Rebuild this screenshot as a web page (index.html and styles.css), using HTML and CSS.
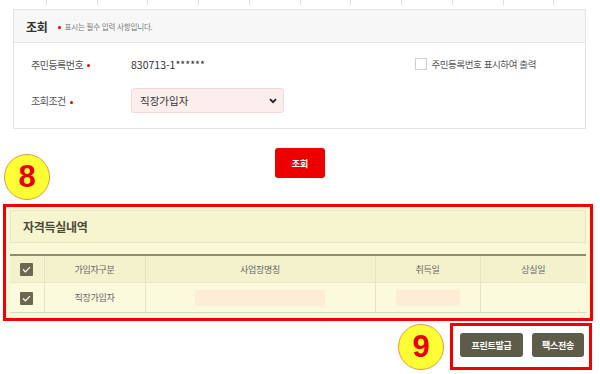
FILE: index.html
```html
<!DOCTYPE html>
<html lang="ko">
<head>
  <meta charset="UTF-8">
  <meta name="viewport" content="width=device-width, initial-scale=1.0">
  <title>자격득실내역 조회</title>
  <link rel="stylesheet" href="styles.css">
</head>
<body>

  <!-- 위쪽 탭 줄 (잘린 부분) -->
  <div class="tabs">
    <span></span><span></span><span></span><span></span><span></span><span></span>
    <span></span><span></span><span></span><span></span><span></span><span></span>
  </div>

  <section class="search">
    <div class="search-head">
      <h2>조회</h2>
      <i class="dot head-dot"></i>
      <span class="note">표시는 필수 입력 사항입니다.</span>
    </div>
    <div class="search-body">
      <div class="row">
        <span class="label">주민등록번호<i class="dot"></i></span>
        <span class="value">830713-1******</span>
        <label class="check"><span class="check-box"></span>주민등록번호 표시하여 출력</label>
      </div>
      <div class="row row-select">
        <span class="label">조회조건<i class="dot"></i></span>
        <div class="select">
          <span>직장가입자</span>
          <svg width="8" height="6" viewBox="0 0 8 6"><path d="M1 1.2 4 4.2 7 1.2" fill="none" stroke="#222" stroke-width="1.8"/></svg>
        </div>
      </div>
    </div>
  </section>

  <div class="actions">
    <button class="btn-search">조회</button>
  </div>

  <div class="result mark-box">
    <div class="result-title">자격득실내역</div>
    <table>
      <colgroup>
        <col style="width:34px">
        <col style="width:101px">
        <col style="width:230px">
        <col style="width:105px">
        <col>
      </colgroup>
      <thead>
        <tr>
          <th><span class="cb"><svg width="9" height="7" viewBox="0 0 9 7"><path d="M1 3.5 3.4 5.8 8 1.2" fill="none" stroke="#fff" stroke-width="1.2"/></svg></span></th>
          <th>가입자구분</th>
          <th>사업장명칭</th>
          <th>취득일</th>
          <th>상실일</th>
        </tr>
      </thead>
      <tbody>
        <tr>
          <td><span class="cb"><svg width="9" height="7" viewBox="0 0 9 7"><path d="M1 3.5 3.4 5.8 8 1.2" fill="none" stroke="#fff" stroke-width="1.2"/></svg></span></td>
          <td>직장가입자</td>
          <td><span class="bar bar-wide"></span></td>
          <td><span class="bar bar-date"></span></td>
          <td></td>
        </tr>
      </tbody>
    </table>
  </div>

  <div class="bottom">
    <div class="btns mark-box">
      <button class="btn-dark">프린트발급</button>
      <button class="btn-dark btn-fax">팩스전송</button>
    </div>
  </div>

  <!-- 설명용 번호 -->
  <span class="mark mark-8">8</span>
  <span class="mark mark-9">9</span>

</body>
</html>
```

FILE: styles.css
```css
body {
  margin: 0;
  width: 600px;
  height: 374px;
  overflow: hidden;
  position: relative;
  background: #fff;
  color: #555;
  font-family: "Noto Sans CJK KR", "Noto Sans", sans-serif;
}

button {
  font-family: inherit;
  cursor: pointer;
}

.tabs {
  display: flex;
  height: 5px;
  margin-left: -4px;
}

.tabs span {
  flex: 0 0 50.75px;
  box-sizing: border-box;
  border-right: 1px solid #dedede;
}

/* 조회 영역 */
.search {
  margin: 4px 14px 0 13px;
  border: 1px solid #e4e4e4;
}

.search-head {
  height: 32px;
  display: flex;
  align-items: center;
  padding-left: 12px;
  background: #f7f7f7;
  border-bottom: 1px solid #e8e8e8;
}

.search-head h2 {
  margin: 0;
  font-size: 12px;
  font-weight: 700;
  color: #333;
  letter-spacing: -0.3px;
}

.dot {
  display: inline-block;
  width: 3px;
  height: 3px;
  border-radius: 50%;
  background: #e00;
  margin-left: 4px;
  vertical-align: middle;
}

.head-dot {
  margin: 2px 3px 0 11px;
}

.note {
  font-size: 7.5px;
  color: #777;
  margin-top: 1px;
  letter-spacing: -0.2px;
}

.search-body {
  padding: 10px 49px 15px 17px;
}

.row {
  display: flex;
  align-items: center;
  height: 22px;
}

.row-select {
  height: 25px;
  margin-top: 13px;
}

.label {
  width: 100px;
  font-size: 10px;
  color: #555;
  letter-spacing: -0.5px;
}

.value {
  flex: 1;
  font-size: 10.5px;
  color: #333;
}

.check {
  display: flex;
  align-items: center;
  gap: 4px;
  font-size: 9.5px;
  color: #555;
  letter-spacing: -0.4px;
}

.check-box {
  width: 12px;
  height: 12px;
  box-sizing: border-box;
  border: 1px solid #cfcfcf;
  background: #fff;
}

.select {
  width: 153px;
  height: 25px;
  box-sizing: border-box;
  display: flex;
  align-items: center;
  justify-content: space-between;
  padding: 0 6px 0 8px;
  border: 1px solid #f6d8d8;
  border-radius: 3px;
  background: #fdeeee;
  font-size: 10.5px;
  color: #333;
}

.actions {
  display: flex;
  justify-content: center;
  padding: 19px 0 26px;
}

.btn-search {
  width: 50px;
  height: 30px;
  border: 0;
  border-radius: 3px;
  background: #ee0000;
  color: #fff;
  font-size: 9px;
  font-weight: 700;
}

/* 빨간 강조 테두리 */
.mark-box {
  border: 3px solid #f20000;
}

.result {
  margin: 0 7px 0 3px;
  padding: 3px 4px 5px 4px;
  background: #f9f8d7;
}

.result-title {
  height: 33px;
  box-sizing: border-box;
  display: flex;
  align-items: center;
  padding-left: 12px;
  border: 1px solid #e8e6c2;
  background: #f6f5d0;
  font-size: 12px;
  font-weight: 700;
  color: #4a4a3a;
  letter-spacing: -0.3px;
}

.result table {
  width: 100%;
  margin-top: 11px;
  border-collapse: collapse;
  table-layout: fixed;
  border-top: 2px solid #8f8d6c;
  border-bottom: 1px solid #d9d7b5;
}

.result th,
.result td {
  padding: 0;
  text-align: center;
  font-size: 9px;
  font-weight: 400;
  color: #666;
  border-left: 1px solid #e6e4c2;
  letter-spacing: -0.3px;
}

.result th:first-child,
.result td:first-child {
  border-left: 0;
}

.result th {
  height: 26px;
  background: #f3f2cc;
  border-bottom: 1px solid #e9e7c6;
}

.result td {
  height: 29px;
  background: #fbfadd;
}

.cb {
  display: inline-flex;
  align-items: center;
  justify-content: center;
  width: 13px;
  height: 13px;
  background: #6a694f;
  border-radius: 1px;
  vertical-align: middle;
}

.bar {
  display: block;
  height: 16px;
  margin: 0 auto;
  background: #fdedd6;
}

.bar-wide {
  width: 130px;
}

.bar-date {
  width: 64px;
}

.bottom {
  display: flex;
  justify-content: flex-end;
  padding: 2px 8px 0 0;
}

.btns {
  display: flex;
  gap: 9px;
  padding: 7px 5px 10px 7px;
}

.btn-dark {
  width: 63px;
  height: 24px;
  border: 0;
  border-radius: 3px;
  background: #5d5b49;
  color: #fff;
  font-size: 9px;
  font-weight: 700;
  letter-spacing: -0.3px;
}

.btn-fax {
  width: 52px;
}

/* 번호 표시 */
.mark {
  position: absolute;
  width: 46px;
  height: 46px;
  box-sizing: border-box;
  display: flex;
  align-items: center;
  justify-content: center;
  border: 1.5px solid #e49a3a;
  border-radius: 50%;
  background: #ffff33;
  color: #e8000b;
  font: 700 31px "Liberation Sans", sans-serif;
}

.mark-8 {
  left: 4px;
  top: 154px;
}

.mark-9 {
  left: 398px;
  top: 324px;
}
```
